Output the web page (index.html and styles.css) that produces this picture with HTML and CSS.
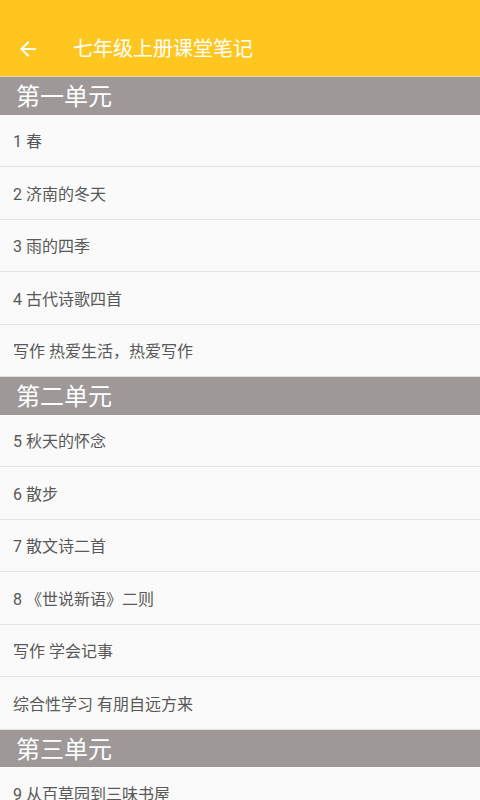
FILE: index.html
```html
<!DOCTYPE html>
<html lang="zh-CN">
<head>
<meta charset="utf-8">
<title>七年级上册课堂笔记</title>
<link rel="stylesheet" href="styles.css">
</head>
<body>
<header class="toolbar">
  <svg class="back" viewBox="0 0 24 24" width="24" height="24" aria-hidden="true">
    <path d="M20 11H7.83l5.59-5.59L12 4l-8 8 8 8 1.41-1.41L7.83 13H20v-2z" fill="#fff"/>
  </svg>
  <h1 class="title">七年级上册课堂笔记</h1>
</header>
<main class="list">
  <div class="section">第一单元</div>
  <div class="item">1 春</div>
  <div class="item">2 济南的冬天</div>
  <div class="item">3 雨的四季</div>
  <div class="item">4 古代诗歌四首</div>
  <div class="item">写作 热爱生活，热爱写作</div>
  <div class="section">第二单元</div>
  <div class="item">5 秋天的怀念</div>
  <div class="item">6 散步</div>
  <div class="item">7 散文诗二首</div>
  <div class="item">8 《世说新语》二则</div>
  <div class="item">写作 学会记事</div>
  <div class="item">综合性学习 有朋自远方来</div>
  <div class="section">第三单元</div>
  <div class="item">9 从百草园到三味书屋</div>
</main>
</body>
</html>
```
FILE: styles.css
```css
html, body {
  margin: 0;
  padding: 0;
}
body {
  width: 480px;
  height: 800px;
  overflow: hidden;
  background: #fafafa;
  font-family: "Roboto", "Noto Sans CJK SC", sans-serif;
}
.toolbar {
  height: 77px;
  background: #ffc61f;
  border-bottom: 1px solid #e9d9a6;
  display: flex;
  align-items: center;
  padding-top: 22px;
  box-sizing: border-box;
}
.back {
  margin-left: 16px;
  flex: none;
}
.title {
  margin: 0 0 0 33px;
  font-size: 20px;
  font-weight: 400;
  color: #fff;
  line-height: 1;
}
.section {
  height: 37.5px;
  background: #9e9898;
  color: #fff;
  font-size: 24px;
  line-height: 37.5px;
  padding: 2px 0 0 16px;
  box-sizing: border-box;
}
.item {
  height: 52.5px;
  box-sizing: border-box;
  border-bottom: 1px solid #e2e2e2;
  padding-left: 13px;
  display: flex;
  align-items: center;
  font-size: 16px;
  color: #585858;
}
```
